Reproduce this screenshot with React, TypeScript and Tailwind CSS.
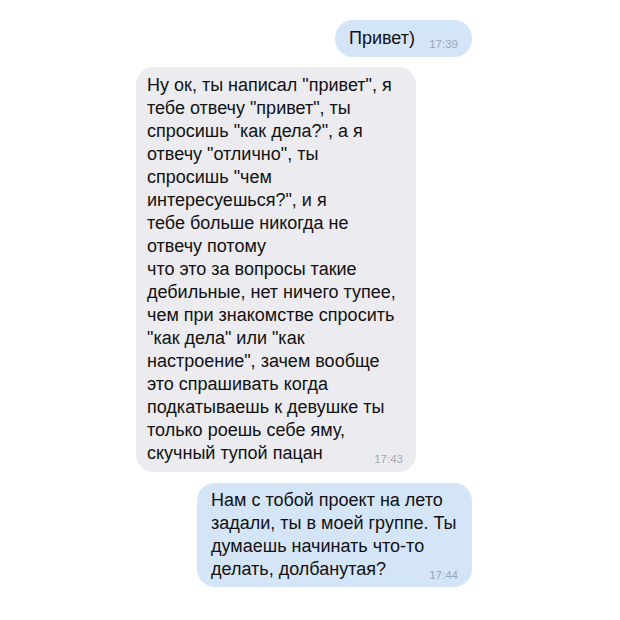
import React from 'react';

type Msg = {
  out: boolean;
  lines: string[];
  time: string;
  box: string;
};

const messages: Msg[] = [
  { out: true, lines: ['Привет)'], time: '17:39', box: 'w-[137px] py-[7px]' },
  {
    out: false,
    box: 'w-[280px] py-[7px]',
    time: '17:43',
    lines: [
      'Ну ок, ты написал "привет", я',
      'тебе отвечу "привет", ты',
      'спросишь "как дела?", а я',
      'отвечу "отлично", ты',
      'спросишь "чем',
      'интересуешься?", и я',
      'тебе больше никогда не',
      'отвечу потому',
      'что это за вопросы такие',
      'дебильные, нет ничего тупее,',
      'чем при знакомстве спросить',
      '"как дела" или "как',
      'настроение", зачем вообще',
      'это спрашивать когда',
      'подкатываешь к девушке ты',
      'только роешь себе яму,',
      'скучный тупой пацан',
    ],
  },
  {
    out: true,
    box: 'w-[275px] py-[6px] mt-[1px]',
    time: '17:44',
    lines: [
      'Нам с тобой проект на лето',
      'задали, ты в моей группе. Ты',
      'думаешь начинать что-то',
      'делать, долбанутая?',
    ],
  },
];

function Bubble({ msg }: { msg: Msg }) {
  const head = msg.lines.slice(0, -1);
  const last = msg.lines[msg.lines.length - 1];
  return (
    <div
      className={
        'rounded-[18px] ' +
        msg.box +
        (msg.out ? ' self-end bg-[#d5e5f8] pl-[14px] pr-[14px]' : ' self-start bg-[#ebebf0] pl-[11px] pr-[13px]')
      }
    >
      {head.map((line, i) => (
        <div key={i} className="whitespace-nowrap">
          {line}
        </div>
      ))}
      <div className="flex items-baseline justify-between whitespace-nowrap">
        <span>{last}</span>
        <span
          className={
            'text-[11.5px] leading-none translate-y-[4px] ' +
            (msg.out ? 'text-[#97a5b8]' : 'text-[#a6a8ae]')
          }
        >
          {msg.time}
        </span>
      </div>
    </div>
  );
}

export default function App() {
  return (
    <div
      className="w-[620px] h-[620px] bg-white flex flex-col gap-[10px] pt-[20px] pl-[136px] pr-[148px] text-[#111111] text-[18px] leading-[23px]"
      style={{ fontFamily: '"Liberation Sans", Arial, sans-serif' }}
    >
      {messages.map((m, i) => (
        <Bubble key={i} msg={m} />
      ))}
    </div>
  );
}
